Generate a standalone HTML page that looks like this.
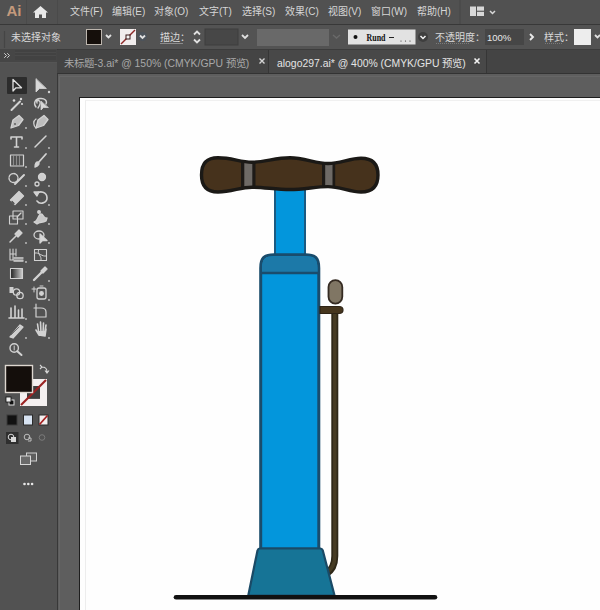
<!DOCTYPE html>
<html lang="zh-CN">
<head>
<meta charset="utf-8">
<style>
*{margin:0;padding:0;box-sizing:border-box;}
html,body{width:600px;height:610px;overflow:hidden;background:#5a5a5a;font-family:"Liberation Sans",sans-serif;}
.abs{position:absolute;}
#menubar{left:0;top:0;width:600px;height:25px;background:#515151;border-bottom:1px solid #383838;}
.mi{position:absolute;top:5px;font-size:10px;line-height:14px;color:#d6d6d6;white-space:nowrap;}
#ctrl{left:0;top:25px;width:600px;height:25px;background:#535353;border-bottom:1px solid #3c3c3c;}
.ct{position:absolute;font-size:10px;line-height:14px;color:#d8d8d8;white-space:nowrap;}
#tabs{left:57px;top:50px;width:543px;height:24px;background:#444444;border-bottom:1px solid #353535;}
.tab{position:absolute;top:0;height:23px;font-size:10.4px;line-height:23px;white-space:nowrap;}
#tools{left:0;top:49px;width:58px;height:561px;background:#525252;border-right:1px solid #383838;}
#paste{left:58px;top:73px;width:542px;height:537px;background:#5e5e5e;border-top:1px solid #333;}
#paste:before{content:"";position:absolute;left:1px;top:2px;right:0;bottom:0;border-left:1px solid #666;border-top:1px solid #666;}
#artboard{left:79px;top:97px;width:521px;height:520px;background:#fefefe;border-left:1px solid #1e1e1e;border-top:1px solid #1e1e1e;}
</style>
</head>
<body>
<!-- menu bar -->
<div id="menubar" class="abs">
  <svg class="abs" style="left:0;top:0" width="60" height="24">
    <text x="6.5" y="15.5" font-family="Liberation Sans" font-weight="bold" font-size="15" fill="#c49a7c">Ai</text>
    <path d="M26.5 0 V24 M57.5 0 V24" stroke="#4a4a4a" stroke-width="1"/>
    <path d="M40.5 6 L33 12.5 L35 12.5 L35 18 L39 18 L39 14.5 L42 14.5 L42 18 L46 18 L46 12.5 L48 12.5 Z" fill="#e8e8e8"/>
  </svg>
  <span class="mi" style="left:70px">文件(F)</span>
  <span class="mi" style="left:112px">编辑(E)</span>
  <span class="mi" style="left:154px">对象(O)</span>
  <span class="mi" style="left:199px">文字(T)</span>
  <span class="mi" style="left:242px">选择(S)</span>
  <span class="mi" style="left:285px">效果(C)</span>
  <span class="mi" style="left:328px">视图(V)</span>
  <span class="mi" style="left:371px">窗口(W)</span>
  <span class="mi" style="left:417px">帮助(H)</span>
  <svg class="abs" style="left:466px;top:4px" width="34" height="16">
    <rect x="4" y="2.5" width="6" height="9.5" fill="#d8d8d8"/>
    <rect x="11" y="2.5" width="7" height="4.2" fill="#d8d8d8"/>
    <rect x="11" y="7.8" width="7" height="4.2" fill="#d8d8d8"/>
    <path d="M24 7 L26.5 9.5 L29 7" stroke="#d8d8d8" stroke-width="1.5" fill="none"/>
  </svg>
  <svg class="abs" style="left:459px;top:0" width="2" height="24"><path d="M1 0 V24" stroke="#474747" stroke-width="1"/>
  </svg>
</div>
<!-- control bar -->
<div id="ctrl" class="abs">
  <span class="ct" style="left:11px;top:6px">未选择对象</span>
  <svg class="abs" style="left:0;top:-1px" width="600" height="25">
    <path d="M4.5 7 V24" stroke="#454545" stroke-width="1.2"/>
    <!-- fill swatch -->
    <rect x="86" y="5" width="16" height="16" fill="#bdb6ae"/>
    <rect x="87" y="6" width="14" height="14" fill="#150f0b"/>
    <path d="M106 11 L108.5 13.5 L111 11" stroke="#e0e0e0" stroke-width="1.8" fill="none"/>
    <!-- stroke swatch -->
    <rect x="120" y="5" width="16" height="16" fill="#f2eeee"/>
    <path d="M121 20 L135 6" stroke="#8e2828" stroke-width="1.4"/>
    <rect x="126" y="11" width="4" height="4" fill="#f4f4f4" stroke="#3a1a1a" stroke-width="1"/>
    <circle cx="142.5" cy="12.5" r="4.5" fill="#485460" opacity="0.6"/>
    <path d="M140 11.5 L142.5 14 L145 11.5" stroke="#e0e0e0" stroke-width="1.8" fill="none"/>
    <!-- spinner -->
    <path d="M194 10.5 L197 7.5 L200 10.5 M194 15.5 L197 18.5 L200 15.5" stroke="#e0e0e0" stroke-width="1.8" fill="none"/>
    <path d="M160 19.5 H183" stroke="#8c8c8c" stroke-width="1"/>
    <path d="M436 19.5 H470" stroke="#7a7a7a" stroke-width="1" stroke-dasharray="1 1"/>
    <path d="M545 19.5 H562" stroke="#7a7a7a" stroke-width="1" stroke-dasharray="1 1"/>
    <rect x="205" y="5" width="33" height="16" fill="#474747" stroke="#3e3e3e" stroke-width="1"/>
    <path d="M242 11 L245 14 L248 11" stroke="#e0e0e0" stroke-width="1.8" fill="none"/>
    <!-- disabled gray box -->
    <rect x="257" y="5" width="72" height="17" fill="#696969"/>
    <path d="M333 11 L336.5 14 L340 11" stroke="#6a6a6a" stroke-width="1.4" fill="none"/>
    <!-- brush dropdown -->
    <rect x="348" y="5.5" width="67.5" height="15" fill="#e2e2e2"/>
    <circle cx="355.5" cy="13" r="2" fill="#111"/>
    <text x="366.5" y="16.5" font-family="Liberation Serif" font-weight="bold" font-size="9.5px" textLength="19" lengthAdjust="spacingAndGlyphs" fill="#111">Rund</text><path d="M389 13.5 H394" stroke="#222" stroke-width="1"/><circle cx="401" cy="17" r="0.6" fill="#333"/><circle cx="405.5" cy="17" r="0.6" fill="#333"/><circle cx="410" cy="17" r="0.6" fill="#333"/>
    <circle cx="423" cy="13" r="5" fill="#3e3e3e"/>
    <path d="M420.5 12 L423 14.5 L425.5 12" stroke="#f0f0f0" stroke-width="1.5" fill="none"/>
    <!-- opacity -->
    <rect x="485" y="5" width="39" height="16" fill="#464646"/>
    <path d="M530 10 L533 13 L530 16" stroke="#e8e8e8" stroke-width="1.9" fill="none"/>
    <!-- style swatch -->
    <rect x="574" y="5" width="17" height="16" fill="#ededed"/>
    <path d="M595 11 L597.5 13.5 L600 11" stroke="#e0e0e0" stroke-width="1.8" fill="none"/>
  </svg>
  <span class="ct" style="left:160px;top:6px">描边：</span>
  <span class="ct" style="left:435px;top:6px">不透明度：</span>
  <span class="ct" style="left:487px;top:6px;font-size:9.5px;color:#e8e8e8">100%</span>
  <span class="ct" style="left:544px;top:6px">样式：</span>
</div>
<div id="tools" class="abs">
<svg class="abs" style="left:0;top:0" width="57" height="561" viewBox="0 49 57 561">
  <defs><linearGradient id="tg" x1="0" x2="1" y1="0" y2="0"><stop offset="0" stop-color="#1e1e1e"/><stop offset="1" stop-color="#d0d0d0"/></linearGradient></defs>
  <g fill="none" stroke="#d2d2d2" stroke-width="1.3" stroke-linejoin="round" stroke-linecap="round">
  <!-- header -->
  <rect x="0" y="49" width="57" height="13" fill="#464646" stroke="none"/>
  <rect x="15" y="50" width="41" height="10" fill="#424242" stroke="none"/>
  <path d="M15 52.5 H56 M15 55.5 H56" stroke="#4a4a4a" stroke-width="1"/>
  <path d="M0 62.5 H57" stroke="#555" stroke-width="1"/>
  <path d="M4.5 53.5 L6.5 55.5 L4.5 57.5 M7.5 53.5 L9.5 55.5 L7.5 57.5" stroke="#cfcfcf" stroke-width="1"/>
  <!-- selected box -->
  <rect x="7" y="77" width="20" height="17" rx="1" fill="#2c2c2c" stroke="none"/>
  <!-- selection arrow outline -->
  <path d="M13 79.5 L13 91 L16 87.8 L21.5 87.8 Z" stroke="#e0e0e0"/>
  <!-- direct selection -->
  <path d="M36 79 L36 92 L39.5 88.5 L46 88.5 Z" fill="#d8d8d8" stroke="#d8d8d8" stroke-width="0.8"/>
  <circle cx="49" cy="92" r="1.2" fill="#d0d0d0" stroke="none"/>
  <!-- magic wand -->
  <path d="M11.5 110 L20 101.5" stroke-width="2"/>
  <circle cx="14" cy="100.5" r="1.3" fill="#d8d8d8" stroke="none"/>
  <circle cx="21" cy="99" r="1.2" fill="#d8d8d8" stroke="none"/>
  <circle cx="22" cy="104" r="1.1" fill="#d8d8d8" stroke="none"/>
  <!-- lasso -->
  <path d="M36 107 C33 103 35 99 40 98.5 C45 98 47.5 101 46 104 M37 103 C36 101 38 100 39.5 101 C40.5 102 40 105 38 108" stroke-width="1.4"/>
  <path d="M41 101.5 L41 110 L43.5 107.5 L48 107.5 Z" fill="#d8d8d8" stroke-width="0.8"/>
  <!-- pen -->
  <path d="M11 128 L13 120 L19 115.5 L23 119.5 L18.5 125.5 Z" fill="#bdbdbd"/>
  <circle cx="15" cy="124" r="0.9" fill="#555" stroke="none"/>
  <circle cx="26" cy="128" r="0.9" fill="#c4c4c4" stroke="none"/>
  <!-- curvature pen -->
  <path d="M36 128 L38 120 L44 115.5 L48 119.5 L43.5 125.5 Z" fill="#bdbdbd"/>
  <path d="M36 128 C33 125 33 121 36 119" />
  <!-- type T -->
  <path d="M11 137 L22 137 M16.5 137 L16.5 147 M14.5 147 L18.5 147 M11 137 L11 139 M22 137 L22 139" stroke-width="1.6"/>
  <circle cx="26" cy="148" r="0.9" fill="#c4c4c4" stroke="none"/>
  <!-- line -->
  <path d="M35 147 L46 136" stroke-width="1.5"/>
  <circle cx="49" cy="148" r="0.9" fill="#c4c4c4" stroke="none"/>
  <!-- rectangle -->
  <rect x="10.5" y="155" width="13" height="11" stroke-width="1.2"/>
  <path d="M13.5 155 V166 M16.5 155 V166 M19.5 155 V166" stroke-width="0.8" stroke="#9a9a9a"/>
  <circle cx="26" cy="167" r="0.9" fill="#c4c4c4" stroke="none"/>
  <!-- paintbrush -->
  <path d="M38 163 L46 154" stroke-width="1.8"/>
  <path d="M35 167 C35 164 36 162 38 162 C40 163 39 166 35 167 Z" fill="#d2d2d2"/>
  <circle cx="49" cy="167" r="0.9" fill="#c4c4c4" stroke="none"/>
  <!-- shaper -->
  <circle cx="13.5" cy="178" r="4.5" stroke-dasharray="2 1"/>
  <path d="M15 184 L24 175" stroke-width="2"/>
  <circle cx="26" cy="186" r="0.9" fill="#c4c4c4" stroke="none"/>
  <!-- blob brush -->
  <circle cx="42" cy="177" r="3.5" fill="#cfcfcf"/>
  <circle cx="37" cy="184" r="2" />
  <circle cx="49" cy="186" r="0.9" fill="#c4c4c4" stroke="none"/>
  <!-- eraser -->
  <path d="M10.5 200 L19 191.5 L23.5 196 L15 204.5 Z" fill="#cfcfcf"/>
  <path d="M12 201.5 L14 203.5" stroke="#444" stroke-width="1.2"/>
  <circle cx="26" cy="205" r="0.9" fill="#c4c4c4" stroke="none"/>
  <!-- rotate -->
  <path d="M36 194 C40 190 47 192 47 198 C47 203 40 205 37 201" stroke-width="1.6"/>
  <path d="M34 192 L37 196 L39 192 Z" fill="#d2d2d2"/>
  <circle cx="49" cy="205" r="0.9" fill="#c4c4c4" stroke="none"/>
  <!-- scale -->
  <rect x="13" y="211" width="10" height="8" stroke-width="1.1"/>
  <rect x="9.5" y="216" width="8" height="8" stroke-width="1.1"/>
  <path d="M17 217 L21 213" />
  <circle cx="26" cy="224" r="0.9" fill="#c4c4c4" stroke="none"/>
  <!-- warp -->
  <path d="M34 222 C38 222 38 214 41 214 C44 214 43 219 47 218 L46 221 C42 223 40 222 37 224 Z" fill="#c8c8c8"/>
  <circle cx="39" cy="212" r="1.3" fill="#d2d2d2"/>
  <circle cx="49" cy="224" r="0.9" fill="#c4c4c4" stroke="none"/>
  <!-- puppet pin -->
  <path d="M15 234 L19 230 L22 233 L18 237 Z" fill="#d0d0d0"/>
  <path d="M16 236 L10 242" stroke-width="1.5"/>
  <circle cx="26" cy="243" r="0.9" fill="#c4c4c4" stroke="none"/>
  <!-- free transform -->
  <ellipse cx="39" cy="235" rx="5" ry="4"/>
  <path d="M40 234 L40 243 L42.5 240.5 L47 240.5 Z" fill="#d8d8d8"/>
  <circle cx="49" cy="243" r="0.9" fill="#c4c4c4" stroke="none"/>
  <!-- perspective grid -->
  <path d="M10 249 V260 H23 M10 254 H16 M13 249 V260 M16 249 V256" stroke-width="1.1"/>
  <path d="M14 258 H23 M14 261 H23" stroke-width="1.4"/>
  <circle cx="26" cy="262" r="0.9" fill="#c4c4c4" stroke="none"/>
  <!-- mesh -->
  <rect x="34.5" y="249.5" width="12" height="11" stroke-width="1.1"/>
  <path d="M35 253 C39 252 42 257 46 256 M38.5 250 C37 254 42 256 41 260" stroke-width="1"/>
  <!-- gradient -->
  <rect x="10.5" y="268.5" width="12" height="10" fill="url(#tg)" stroke-width="1.1"/>
  <!-- eyedropper -->
  <path d="M34 280 L42 272" stroke-width="2.4"/>
  <path d="M41 271 L45 267 L47 269 L43 273 Z" fill="#d2d2d2"/>
  <circle cx="49" cy="281" r="0.9" fill="#c4c4c4" stroke="none"/>
  <!-- blend -->
  <rect x="9.5" y="287" width="4" height="6" fill="#cfcfcf" stroke="none"/>
  <circle cx="16.5" cy="292" r="3.2"/>
  <circle cx="20" cy="295.5" r="3.2"/>
  <!-- symbol sprayer -->
  <rect x="37" y="288" width="9" height="11" rx="2"/>
  <circle cx="41.5" cy="293.5" r="1.8" fill="#d2d2d2"/>
  <path d="M40 286 H43 M34 287 V292 M32 289 H36" stroke-width="1"/>
  <circle cx="49" cy="300" r="0.9" fill="#c4c4c4" stroke="none"/>
  <!-- graph -->
  <path d="M9 318 H24 M11 318 V308 M15 318 V306 M18.5 318 V310 M22 318 V309" stroke-width="1.6"/>
  <circle cx="26" cy="319" r="0.9" fill="#c4c4c4" stroke="none"/>
  <!-- artboard -->
  <path d="M36 306 V317 H46 V312 C46 309 44 308 41 308 H34 M36 304 V306" stroke-width="1.2"/>
  <!-- slice -->
  <path d="M10 337 L20 325 L23 327 L13 338 Z" fill="#cfcfcf"/>
  <path d="M11 335 L19 327" stroke="#555" stroke-width="0.8"/>
  <circle cx="26" cy="338" r="0.9" fill="#c4c4c4" stroke="none"/>
  <!-- hand -->
  <path d="M36 330 L39 335 L45 336 L46 329 M39 334 L37.5 324 M41 333 L40.5 322 M43 333 L43.5 323 M45 331 L46 325" stroke-width="1.6"/>
  <path d="M38 331 L45 331 L45 336 L39 336 Z" fill="#d2d2d2" stroke="none"/>
  <circle cx="49" cy="338" r="0.9" fill="#c4c4c4" stroke="none"/>
  <!-- zoom -->
  <circle cx="14.2" cy="348" r="4.2" stroke-width="1.4"/>
  <path d="M17.3 351.2 L21.5 355" stroke-width="2"/>
  <path d="M14.2 346 V350" stroke-width="1"/>
  </g>
  <!-- fill / stroke -->
  <rect x="26" y="384" width="14" height="14" fill="#3e3e3e"/>
  <path d="M20 379 H47 V406 H20 Z M27 386 V399 H40 V386 Z" fill="#f4f0f0" fill-rule="evenodd"/>
  <path d="M21 405 L46 380" stroke="#9b2323" stroke-width="2.2"/>
  <rect x="5.5" y="365.5" width="27" height="27" fill="#140e0b" stroke="#ddd6cf" stroke-width="1.4"/>
  <path d="M42 367 C45 367 47 369 47 372 M45 370.5 L47 373 L49 370.5 M40 365 L42 367 L40 369" fill="none" stroke="#d8d8d8" stroke-width="1.1"/>
  <rect x="9" y="400" width="5" height="5" fill="#111" stroke="#e0e0e0" stroke-width="1"/>
  <rect x="6" y="397" width="5" height="5" fill="#eee" stroke="#111" stroke-width="0.8"/>
  <!-- color modes -->
  <rect x="7" y="415" width="10" height="10" fill="#111" stroke="#3a3a3a" stroke-width="1"/>
  <rect x="23.5" y="415" width="9" height="10" fill="#d7e3f2" stroke="#2a2a2a" stroke-width="1"/>
  <rect x="39" y="415" width="9" height="10" fill="#f3efef" stroke="#2a2a2a" stroke-width="1"/>
  <path d="M39.5 424.5 L47.5 415.5" stroke="#a52020" stroke-width="1.8"/>
  <!-- draw modes -->
  <rect x="6" y="432" width="12.5" height="12" fill="#2f2f2f"/>
  <g fill="none" stroke="#d8d8d8" stroke-width="1">
  <circle cx="11" cy="437" r="2.8"/><rect x="11.5" y="437.5" width="4" height="4" fill="#d8d8d8"/>
  <circle cx="27" cy="437" r="2.8" stroke="#bdbdbd"/><path d="M28 438 H31 V441 H28" stroke="#bdbdbd"/>
  <circle cx="42" cy="437.5" r="2.8" stroke="#7a7a7a"/>
  </g>
  <!-- screen mode -->
  <rect x="26.5" y="453" width="10" height="8" fill="#5e5e5e" stroke="#d0d0d0" stroke-width="1"/>
  <rect x="20.5" y="456" width="10" height="8.5" fill="#6a6a6a" stroke="#d8d8d8" stroke-width="1"/>
  <!-- more -->
  <circle cx="24.5" cy="484" r="1.3" fill="#e8e8e8"/>
  <circle cx="28.3" cy="484" r="1.3" fill="#e8e8e8"/>
  <circle cx="32.1" cy="484" r="1.3" fill="#e8e8e8"/>
</svg>
</div>
<div id="tabs" class="abs">
  <div class="tab" style="left:0;width:211px;color:#a8a8a8;"><span style="position:absolute;left:7px;top:2px">未标题-3.ai* @ 150% (CMYK/GPU 预览)</span>
    <svg style="position:absolute;left:201px;top:7px" width="8" height="8"><path d="M1.5 1.5 L6.5 6.5 M6.5 1.5 L1.5 6.5" stroke="#d4d4d4" stroke-width="1.4"/></svg></div>
  <div class="tab" style="left:211px;width:219px;background:#484848;color:#e4e4e4;border-left:1px solid #363636;border-right:1px solid #363636;"><span style="position:absolute;left:8px;top:2px">alogo297.ai* @ 400% (CMYK/GPU 预览)</span>
    <svg style="position:absolute;left:204px;top:7px" width="8" height="8"><path d="M1.5 1.5 L6.5 6.5 M6.5 1.5 L1.5 6.5" stroke="#f4f4f4" stroke-width="1.6"/></svg></div>
</div>
<div id="paste" class="abs"></div>
<div id="artboard" class="abs"><div style="position:absolute;left:5px;top:2px;right:0;bottom:0;border-left:1px solid #ededed;border-top:1px solid #f0f0f0;"></div></div>
<svg class="abs" style="left:0;top:0" width="600" height="610">
  <defs>
    <clipPath id="hc"><path id="hp" d="M201.5 175 C201.5 162 208 157.8 218 157.8 C232 157.8 240 162.3 252 162.3 C264 162.3 276 157.8 290 157.8 C304 157.8 316 163.5 328 163.5 C340 163.5 350 158.3 361 158.3 C372 158.3 378 164 378 175 C378 187 372 192 361 192 C350 192 340 186.6 328 186.6 C316 186.6 304 189.5 290 189.5 C276 189.5 264 187.2 252 187.2 C240 187.2 232 192 218 192 C208 192 201.5 187 201.5 175 Z"/></clipPath>
  </defs>
  <!-- hose -->
  <path d="M334.8 312 L334.8 556 C334.8 566 331 571 326 574" fill="none" stroke="#2f2818" stroke-width="7"/>
  <path d="M334.8 312 L334.8 556 C334.8 565 331.5 569.5 327 572.5" fill="none" stroke="#463b23" stroke-width="3.5"/>
  <!-- rod -->
  <rect x="275" y="186" width="30" height="70" fill="#0396dc" stroke="#1a5a82" stroke-width="2"/>
  <!-- cylinder -->
  <path d="M260.7 549 L260.7 268 C260.7 258 264 254.8 274 254.8 L305.5 254.8 C315.5 254.8 318.8 258 318.8 268 L318.8 549 Z" fill="#0396dc" stroke="#1a4c6c" stroke-width="3"/>
  <path d="M262 273 L262 268 C262 259 265 256.2 274 256.2 L305.5 256.2 C314.5 256.2 317.5 259 317.5 268 L317.5 273 Z" fill="#1c79a8"/>
  <path d="M261 273 H318.5" stroke="#1a4c6c" stroke-width="2.6"/>
  <!-- base -->
  <path d="M259.5 548.5 L320.5 548.5 Q322 548.5 322.8 550.5 L334.5 595.5 L248.3 595.5 L257.5 550.5 Q258.2 548.5 259.5 548.5 Z" fill="#167496" stroke="#1a4a66" stroke-width="2.2"/>
  <!-- ground -->
  <path d="M176 597.2 L435 597.2" stroke="#111" stroke-width="4.6" stroke-linecap="round"/>
  <!-- gauge -->
  <rect x="328.5" y="280.2" width="13.8" height="23.4" rx="6.9" fill="#807664" stroke="#352b22" stroke-width="1.8"/>
  <path d="M320 306.5 L339 306.5 Q343 306.5 343 310 Q343 313.5 339 313.5 L320 313.5 Z" fill="#46361e" stroke="#2e2416" stroke-width="1.2"/>
  <!-- handle -->
  <g clip-path="url(#hc)">
    <rect x="195" y="150" width="190" height="50" fill="#46321c"/>
    <rect x="241" y="150" width="14.5" height="50" fill="#1d1a17"/>
    <rect x="244.3" y="150" width="8" height="50" fill="#6e6a66"/>
    <rect x="322" y="150" width="13.2" height="50" fill="#1d1a17"/>
    <rect x="325.2" y="150" width="7.3" height="50" fill="#6e6a66"/>
  </g>
  <use href="#hp" fill="none" stroke="#1b1916" stroke-width="3.4"/>
</svg>

</body>
</html>
